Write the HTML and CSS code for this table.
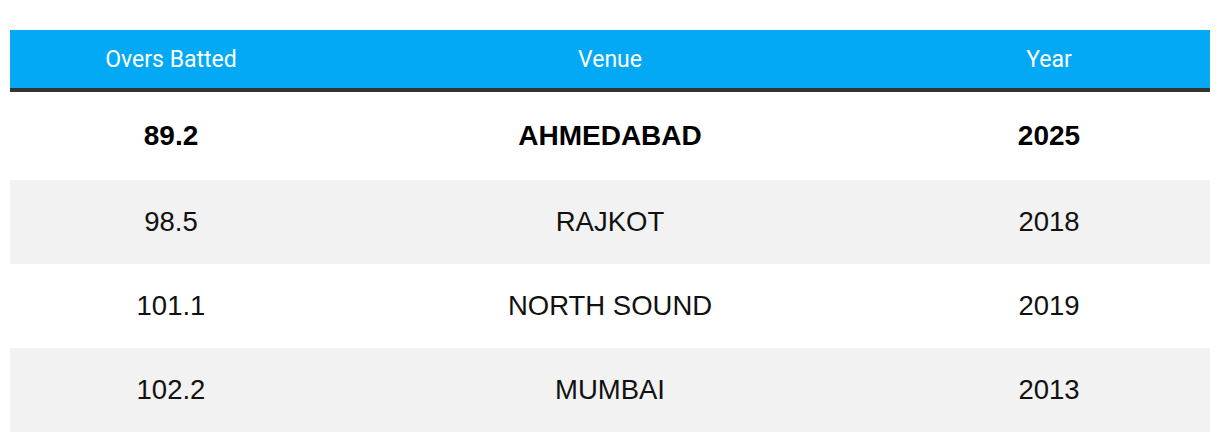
FILE: index.html
```html
<!DOCTYPE html>
<html>
<head>
<meta charset="utf-8">
<link rel="stylesheet" href="styles.css">
</head>
<body>
<table class="stats">
  <colgroup>
    <col class="c-side">
    <col class="c-mid">
    <col class="c-side">
  </colgroup>
  <thead>
    <tr><th>Overs Batted</th><th>Venue</th><th>Year</th></tr>
  </thead>
  <tbody>
    <tr class="hl"><td>89.2</td><td>AHMEDABAD</td><td>2025</td></tr>
    <tr class="alt"><td>98.5</td><td>RAJKOT</td><td>2018</td></tr>
    <tr><td>101.1</td><td>NORTH SOUND</td><td>2019</td></tr>
    <tr class="alt"><td>102.2</td><td>MUMBAI</td><td>2013</td></tr>
  </tbody>
</table>
</body>
</html>
```
FILE: styles.css
```css
html, body {
  margin: 0;
  padding: 0;
  background: #ffffff;
}
body {
  padding: 30px 10px 0 10px;
  font-family: "Liberation Sans", Arial, sans-serif;
}
.stats {
  width: 1200px;
  border-collapse: collapse;
  table-layout: fixed;
}
.c-side { width: 322px; }
.c-mid { width: 556px; }
.stats thead th {
  background: #03a9f4;
  color: #ffffff;
  font-family: "Roboto", "Liberation Sans", sans-serif;
  font-weight: 400;
  font-size: 23px;
  height: 58px;
  padding: 0;
  text-align: center;
  vertical-align: middle;
  border-bottom: 4px solid #333333;
}
.stats td {
  height: 84px;
  padding: 0;
  text-align: center;
  vertical-align: middle;
  font-size: 27.5px;
  color: #111111;
}
.stats tr.hl td {
  height: 88px;
  font-size: 28px;
  font-weight: bold;
  color: #000000;
}
.stats tr.alt td {
  background: #f2f2f2;
}
```
